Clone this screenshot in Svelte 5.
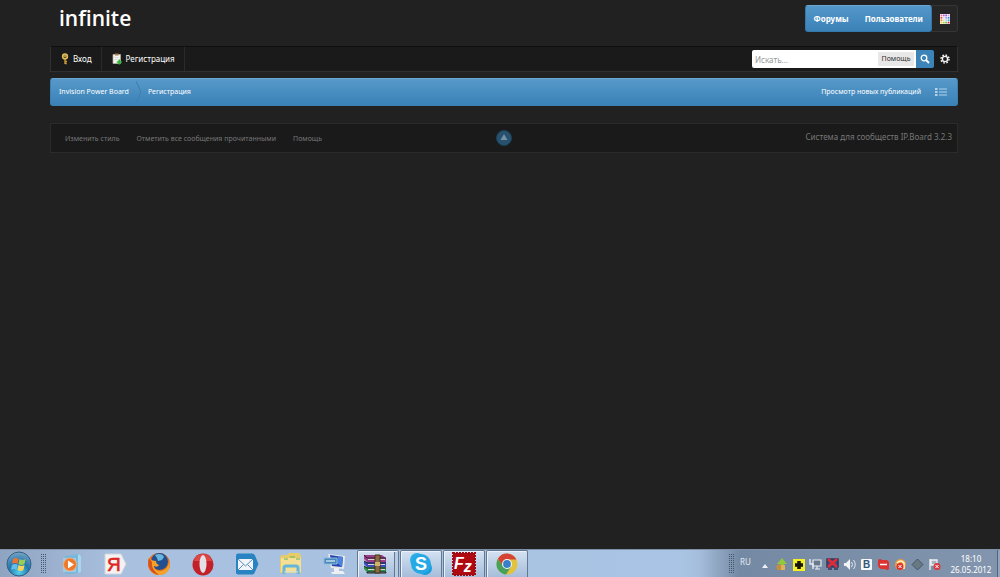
<script>
  let query = $state('');

  const footerLinks = ['Изменить стиль', 'Отметить все сообщения прочитанными', 'Помощь'];
  const pinned = ['Медиаплеер', 'Яндекс', 'Firefox', 'Opera', 'Почта', 'Проводник', 'Компьютер'];
  const running = ['WinRAR', 'Skype', 'FileZilla', 'Chrome'];
  const tray = ['update', 'plus', 'device', 'network', 'volume', 'vk', 'chat', 'avast', 'diamond', 'flag'];

  const swatches = [
    '#f6708a', '#c75ad8', '#7a69e8', '#e39ad0',
    '#e4473f', '#f2c7e8', '#7fa5f5', '#5d7be8',
    '#f28a35', '#f3dca0', '#98d6ef', '#44a6e0',
    '#f6c34a', '#b8cc42', '#6cbf48', '#d92458',
  ];
</script>

<div class="screen">
  <main class="board">
    <header>
      <a class="logo" href="#home">infinite</a>
      <nav class="primary">
        <div class="tabs">
          <a href="#forums">Форумы</a>
          <a href="#members">Пользователи</a>
        </div>
        <button class="palette" aria-label="Цвета">
          <svg width="10" height="10" viewBox="0 0 10 10">
            <rect width="10" height="10" fill="#fff" />
            {#each swatches as fill, i}
              <rect x={0.5 + (i % 4) * 2.4} y={0.5 + Math.floor(i / 4) * 2.4} width="1.8" height="1.8" {fill} />
            {/each}
          </svg>
        </button>
      </nav>
    </header>

    <div class="userbar">
      <a class="user-link" href="#login">
        <svg width="8" height="12" viewBox="0 0 8 12">
          <path d="M4 5v6M4 8.5h2M4 10.5h1.8" stroke="#c99a35" stroke-width="1.4" />
          <circle cx="4" cy="3.4" r="2.4" fill="#5c4515" stroke="#e3bd55" stroke-width="1.5" />
          <path d="M2.5 3h3" stroke="#f5dd90" />
        </svg>
        Вход
      </a>
      <a class="user-link" href="#register">
        <svg width="10" height="12" viewBox="0 0 10 12">
          <path d="M1 1.5h7.5v9H1z" fill="#f3f3ee" stroke="#b9b6a8" stroke-width=".7" />
          <path d="M3 .5h3.5v2H3z" fill="#a7794c" />
          <path d="M2.5 4.5h4M2.5 6.5h3" stroke="#ccd" stroke-width=".7" />
          <path d="M7.3 6.5v5M4.8 9h5" stroke="#28b52c" stroke-width="1.7" />
        </svg>
        Регистрация
      </a>
      <form class="search" onsubmit={(e) => e.preventDefault()}>
        <input type="text" aria-label="Поиск" placeholder="Искать..." bind:value={query} />
        <button type="button" class="scope">Помощь</button>
        <button class="go" aria-label="Найти">
          <svg width="10" height="10" viewBox="0 0 10 10" fill="none" stroke="#fff">
            <circle cx="4" cy="4" r="2.8" stroke-width="1.3" />
            <path d="M6 6l3 3" stroke-width="1.8" />
          </svg>
        </button>
        <button type="button" class="gear" aria-label="Расширенный поиск">
          <svg width="10" height="10" viewBox="0 0 10 10" fill="none" stroke="#f4f4f4">
            <circle cx="5" cy="5" r="2.6" stroke-width="1.4" />
            <circle cx="5" cy="5" r="4" stroke-width="1.5" stroke-dasharray="1.6 1.54" />
          </svg>
        </button>
      </form>
    </div>

    <nav class="crumbs">
      <a href="#board">Invision Power Board</a>
      <svg class="chevron" width="7" height="22" viewBox="0 0 7 22" fill="none">
        <path d="M1 0l5 11-5 11" stroke="#3f7eb0" />
      </svg>
      <a href="#register">Регистрация</a>
      <a class="new-posts" href="#new">Просмотр новых публикаций</a>
      <button aria-label="Список">
        <svg width="12" height="8" viewBox="0 0 12 8" fill="#b2d3ea">
          <path d="M0 0h2.5v2H0zM0 3h2.5v2H0zM0 6h2.5v2H0zM4 .5h8v1H4zM4 3.5h8v1H4zM4 6.5h8v1H4z" />
        </svg>
      </button>
    </nav>

    <footer>
      <div class="footer-links">
        {#each footerLinks as link}
          <a href="#footer">{link}</a>
        {/each}
      </div>
      <a class="top" href="#top" aria-label="Наверх">
        <svg width="16" height="16" viewBox="0 0 16 16">
          <circle cx="8" cy="8" r="7.5" fill="#27516d" stroke="#1e425b" />
          <path d="M8 4l3.5 6h-7z" fill="#7390a6" />
        </svg>
      </a>
      <a class="copyright" href="#ipboard">Система для сообществ IP.Board 3.2.3</a>
    </footer>
  </main>

  {#snippet appIcon(name)}
    <svg width="24" height="24" viewBox="0 0 24 24">
      {#if name === 'Медиаплеер'}
        <path d="M6 4l13-2v19l-13 1z" fill="#75b9df" />
        <path d="M19 2l3 2v16l-3 1z" fill="#a8d6ee" />
        <path d="M4 6h13v14H4z" fill="#9fcae6" />
        <circle cx="11" cy="12.5" r="6.5" fill="#ed792d" stroke="#f5ad75" />
        <path d="M9 8.5l6 4-6 4z" fill="#fff" />
      {:else if name === 'Яндекс'}
        <path d="M2 2h16l5 10-5 10H2z" fill="#f5f2f2" stroke="#d2d6df" />
        <text x="4" y="19" font-family="Liberation Sans" font-size="19" fill="#df251d" stroke="#df251d" stroke-width=".6">Я</text>
      {:else if name === 'Firefox'}
        <circle cx="12" cy="12" r="11" fill="#df691d" />
        <circle cx="12.5" cy="9.5" r="8.5" fill="#234f91" />
        <path d="M8 3c4-2 8-1 9 2l-2 3-4 1-1-3z" fill="#67b6df" />
        <path d="M2 5c-3 8 1 18 10 18 8 0 13-7 10-15 0 7-4 11-9 11-4 0-6-3-6-5 2 1 4 1 5-1-2-1-3-2-3-4-3 0-5-1-7-4z" fill="#f3a128" />
        <path d="M2 6c-3 8 2 16 10 17-4-3-8-7-7-13z" fill="#d9501b" />
      {:else if name === 'Opera'}
        <ellipse cx="12" cy="12.5" rx="10.5" ry="11" fill="#c4202a" />
        <path d="M3 9c1-6 6-7 9-7s8 2 9 7z" fill="#e8584f" opacity=".7" />
        <ellipse cx="12" cy="12" rx="3.5" ry="9" fill="#e4dfe6" />
      {:else if name === 'Почта'}
        <path d="M3 1.5h14q2 0 3 2l3.5 8.5-4 9q-.7 1.5-2.5 1.5H3q-2 0-2-2v-17q0-2 2-2z" fill="#2783c2" />
        <path d="M3 7h15v11H3z" fill="#f1f5fa" />
        <path d="M3 7l7.5 7L18 7M3 18l5.5-5.5M18 18l-5.5-5.5" fill="none" stroke="#5a8fba" />
      {:else if name === 'Проводник'}
        <path d="M1 5l2-2h5l2-2h10l2 2v18H1z" fill="#e8cb69" />
        <path d="M2 6h20v14H2z" fill="#f4df94" />
        <path d="M5 7h4M11 5h5M17 7h4" stroke="#65b45c" />
        <path d="M5 22v-6q0-2 2-2h10q2 0 2 2v6" fill="none" stroke="#66b5da" stroke-width="3" />
        <path d="M5 20h14" stroke="#c5e6f3" />
      {:else if name === 'Компьютер'}
        <path d="M5 2l17 2-1 13-13-1z" fill="#e5e7ea" />
        <path d="M7 3l13 2-1 10-10-1z" fill="#2341ad" />
        <path d="M15 4l5 1-1 10-5-4z" fill="#4d83db" />
        <path d="M1 6h13v6H1z" fill="#4a88bc" stroke="#88bddf" />
        <path d="M3 8h9v2H3z" fill="#a3c8df" />
        <path d="M11 16h5v3h4l2 3H9l-1-2h3z" fill="#edeff1" />
      {:else if name === 'WinRAR'}
        <path d="M1 3h18l4 3v4H4L1 7z" fill="#9d3c89" />
        <path d="M1 9l3 1h19v5H4l-3-3z" fill="#3a4dbb" />
        <path d="M1 14l3 1h19v5H4l-3-3z" fill="#2f9149" />
        <path d="M1 3l3 3h19M1 9l3 2h19M1 14l3 2h19M4 20h19v1H4z" fill="none" stroke="#262329" />
        <path d="M5 7.5h17M5 12.5h17M5 17.5h17" stroke="#dcd4d4" stroke-width="1.2" />
        <path d="M12 3h5v18h-5z" fill="#8a6a40" stroke="#43321e" />
        <path d="M12 10h5v4h-5z" fill="#d2b268" />
      {:else if name === 'Skype'}
        <circle cx="8" cy="8" r="7" fill="#2baee8" />
        <circle cx="16" cy="16" r="7" fill="#1b9bdc" />
        <circle cx="12" cy="12" r="10" fill="#25a9e5" />
        <text x="6" y="18" font-family="Liberation Sans" font-size="18" font-weight="bold" fill="#fff">S</text>
      {:else if name === 'FileZilla'}
        <path d="M1 1h22v22H1z" fill="#b00912" stroke="#9c0b12" stroke-width="2" stroke-dasharray="2 1" />
        <text x="2" y="17" font-family="Liberation Sans" font-size="16" font-style="italic" font-weight="bold" fill="#fff">F<tspan dy="3">z</tspan></text>
      {:else}
        <circle cx="12" cy="12" r="10.5" fill="#e3c33b" />
        <path d="M2.9 6.8A10.5 10.5 0 0 1 21.4 7.5H12l-4.2 7z" fill="#d54336" />
        <path d="M2.7 7A10.5 10.5 0 0 0 11 22.5l5-7.5-8-1z" fill="#49a05a" />
        <circle cx="12" cy="12" r="5" fill="#f4f4f2" />
        <circle cx="12" cy="12" r="3.9" fill="#377fc6" />
      {/if}
    </svg>
  {/snippet}

  {#snippet trayIcon(name)}
    <svg width="13" height="13" viewBox="0 0 13 13">
      {#if name === 'update'}
        <path d="M7 0l5 6H9v4H5V6H2z" fill="#8fca3c" />
        <path d="M1 8l4-2 4 2v4H2z" fill="#c28d42" />
        <path d="M6 7h4v5H6z" fill="#dfb05a" />
      {:else if name === 'plus'}
        <path d="M1 1h12v12H1z" fill="#f5ef26" />
        <path d="M7 3v8M3 7h8" stroke="#15150c" stroke-width="3.6" />
      {:else if name === 'device'}
        <path d="M4 2h8v6H4zM6 11h5M8 8v3" fill="#68798e" stroke="#e6ebf1" stroke-width="1.2" />
        <path d="M1 1v5h3v5" fill="none" stroke="#e6ebf1" stroke-width="1.4" />
      {:else if name === 'network'}
        <path d="M1 1h11v8H1zM2 11h4M8 11h4" fill="#424b76" stroke="#303860" stroke-width="1.5" />
        <path d="M2 1l9 8M11 1L2 9" stroke="#e42b35" stroke-width="2.5" />
      {:else if name === 'volume'}
        <path d="M1 5h2l4-4v11L3 8H1z" fill="#f1f3f6" />
        <path d="M8.5 4q2 2.5 0 5M10.5 2q3.5 4.5 0 9" fill="none" stroke="#e4e9ef" />
      {:else if name === 'vk'}
        <rect x="1" y="1" width="11" height="11" rx="1" fill="#f6f8fa" />
        <text x="3" y="10" font-family="Liberation Sans" font-size="10" font-weight="bold" fill="#355575">B</text>
      {:else if name === 'chat'}
        <path d="M1 2q2-2 4 0h5q3 2 2 5v4q-2 2-4 0H4Q0 9 1 5z" fill="#dc3431" />
        <path d="M3 6.5h7" stroke="#fff" stroke-width="1.5" />
      {:else if name === 'avast'}
        <circle cx="6.5" cy="6.5" r="5.5" fill="#ee9b35" />
        <path d="M3 5q4-4 7 0v6" fill="none" stroke="#fff3d5" stroke-width="1.5" />
        <circle cx="6" cy="8.5" r="3.5" fill="#d83433" />
        <path d="M4.5 7l3 3M7.5 7l-3 3" stroke="#fff" />
      {:else if name === 'diamond'}
        <path d="M6.5 1L12 6.5 6.5 12 1 6.5z" fill="#687984" stroke="#465762" />
      {:else}
        <path d="M2 1v11M3 2h6v5H3z" fill="#a7b5c5" stroke="#eef1f4" stroke-width="1.3" />
        <circle cx="9" cy="8.5" r="3.5" fill="#d73c3f" />
        <path d="M7.5 7l3 3M10.5 7l-3 3" stroke="#fff" />
      {/if}
    </svg>
  {/snippet}

  <div class="taskbar">
    <button class="start" aria-label="Пуск">
      <svg width="26" height="26" viewBox="0 0 26 26">
        <defs>
          <radialGradient id="orb" cx=".5" cy=".85" r=".85">
            <stop offset="0" stop-color="#53d0ec" />
            <stop offset=".5" stop-color="#2376aa" />
            <stop offset="1" stop-color="#78a5c5" />
          </radialGradient>
        </defs>
        <circle cx="13" cy="13" r="12" fill="url(#orb)" stroke="#365d82" />
        <path d="M7 8q3-2 5.5 0l-1 5q-2-2-5.5 0z" fill="#ee7135" />
        <path d="M13.5 8q3 2 6 0l-1 5q-3 2-6 0z" fill="#9ccc54" />
        <path d="M6 14q3-2 5.5 0l-1 5q-2-2-5.5 0z" fill="#65bdeb" />
        <path d="M12.5 14q3 2 6 0l-1 5q-3 2-6 0z" fill="#f8d45b" />
      </svg>
    </button>
    <span class="grip"></span>
    <div class="pinned">
      {#each pinned as name}
        <button aria-label={name}>{@render appIcon(name)}</button>
      {/each}
    </div>
    <div class="running">
      {#each running as name}
        <button class:stacked={name === 'WinRAR'} aria-label={name}>{@render appIcon(name)}</button>
      {/each}
    </div>
    <div class="notification">
      <span class="grip"></span>
      <span class="lang">RU</span>
      <button class="more" aria-label="Показать скрытые значки">
        <svg width="6" height="4" viewBox="0 0 6 4"><path d="M3 0l3 4H0z" fill="#edf1f5" /></svg>
      </button>
      <div class="tray">
        {#each tray as name}
          <button aria-label={name}>{@render trayIcon(name)}</button>
        {/each}
      </div>
      <div class="clock"><span>18:10</span><span>26.05.2012</span></div>
      <span class="desktop"></span>
    </div>
  </div>
</div>

<style>
  :global(body) {
    margin: 0;
    background: #212121;
  }
  .screen {
    display: flex;
    flex-direction: column;
    min-height: 100vh;
    font: 8px/12px "Noto Sans", sans-serif;
    color: #fff;
    background: #212121;
  }
  .screen * {
    box-sizing: border-box;
  }
  a {
    color: inherit;
    text-decoration: none;
    white-space: nowrap;
  }
  button {
    display: flex;
    align-items: center;
    justify-content: center;
    padding: 0;
    border: 0;
    background: none;
    color: inherit;
    font: inherit;
    cursor: pointer;
  }
  svg {
    display: block;
    flex: none;
  }
  .board {
    flex: 1;
    margin: 0 42px 0 50px;
  }
  header {
    display: flex;
    justify-content: space-between;
    height: 46px;
    padding: 5px 0 0 9px;
  }
  .logo {
    font: 600 21px/27px "Open Sans", sans-serif;
  }
  .primary {
    display: flex;
    height: 27px;
  }
  .tabs {
    display: flex;
    align-items: center;
    gap: 16px;
    padding: 0 8px;
    border: 1px solid #3478aa;
    border-top-color: #6ba7d0;
    border-radius: 3px;
    background: linear-gradient(#5497c9, #3b82b8);
    font-weight: bold;
  }
  .palette {
    width: 26px;
    border: 1px solid #353535;
    border-left: 0;
    border-radius: 0 3px 3px 0;
    background: #262626;
  }
  .userbar {
    display: flex;
    height: 26px;
    border: 1px solid #303030;
    border-top-color: #0f0f0f;
    background: #1a1a1a;
  }
  .user-link {
    display: flex;
    align-items: center;
    gap: 4px;
    padding: 0 9px 0 10px;
    border-right: 1px solid #2b2b2b;
  }
  .search {
    display: flex;
    align-items: center;
    margin-left: auto;
    padding-right: 1px;
  }
  .search input {
    width: 126px;
    height: 18px;
    padding: 0 3px;
    border: 0;
    border-radius: 2px 0 0 2px;
    background: #fff;
    color: #333;
    font: inherit;
    outline: 0;
  }
  .search input::placeholder {
    color: #999;
  }
  .scope {
    width: 38px;
    height: 18px;
    border: solid #fff;
    border-width: 2px 2px 2px 0;
    background: #e8e8e8;
    color: #333;
    font-size: 7px;
  }
  .go {
    width: 18px;
    height: 18px;
    border-radius: 0 2px 2px 0;
    background: #3c83b8;
  }
  .gear {
    width: 22px;
    height: 18px;
  }
  .crumbs {
    display: flex;
    align-items: center;
    height: 28px;
    margin-top: 6px;
    padding: 0 10px 0 8px;
    border: 1px solid #3b80b3;
    border-top-color: #69a5ce;
    border-radius: 3px;
    background: linear-gradient(#5799c9, #3a82b8);
    font-size: 7px;
  }
  .chevron {
    margin: 0 6px;
  }
  .new-posts {
    margin: 0 14px 0 auto;
  }
  footer {
    display: grid;
    grid-template-columns: 1fr auto 1fr;
    align-items: center;
    height: 30px;
    margin-top: 17px;
    padding: 0 5px;
    border: 1px solid #2b2b2b;
    background: #1a1a1a;
    color: #777;
  }
  .footer-links {
    display: flex;
    gap: 17px;
    padding: 2px 0 0 9px;
    font-size: 7px;
  }
  .copyright {
    justify-self: end;
    padding-bottom: 2px;
  }
  .taskbar {
    display: flex;
    height: 28px;
    border-top: 1px solid #7f91a8;
    background: linear-gradient(90deg, #8fa4c0, #a9c0df 12%, #a9c4e4 68%, #a5bddb 70%, #7489a3 74%, #8395ae);
  }
  .start {
    width: 38px;
  }
  .grip {
    width: 6px;
    margin: 4px 2px 3px;
    background: conic-gradient(#43566f 90deg, transparent 90deg) 0 0 / 2px 2px;
  }
  .pinned {
    display: flex;
    margin-left: 1px;
  }
  .pinned button {
    width: 44px;
  }
  .running {
    display: flex;
    gap: 1px;
  }
  .running button {
    width: 42px;
    border: 1px solid #637991;
    border-bottom: 0;
    border-radius: 2px 2px 0 0;
    background: linear-gradient(#d4e1f1, #a6bdda);
    box-shadow: inset 1px 1px #eaf2fb;
  }
  .running .stacked {
    padding-right: 6px;
    box-shadow: inset 1px 1px #eaf2fb, inset -3px 0 #b8cbe2, inset -4px 0 #637991;
  }
  .notification {
    display: flex;
    margin-left: auto;
  }
  .lang {
    width: 20px;
    padding: 6px 0 0 4px;
    color: #e6ecf3;
  }
  .more {
    width: 17px;
    padding-top: 4px;
  }
  .tray {
    display: flex;
    padding-top: 2px;
  }
  .tray button {
    width: 17px;
  }
  .clock {
    display: flex;
    flex-direction: column;
    align-items: center;
    justify-content: center;
    width: 54px;
    padding-left: 2px;
    line-height: 11px;
  }
  .desktop {
    width: 3px;
    border-left: 1px solid #52657e;
    background: #93a5bd;
  }
</style>
